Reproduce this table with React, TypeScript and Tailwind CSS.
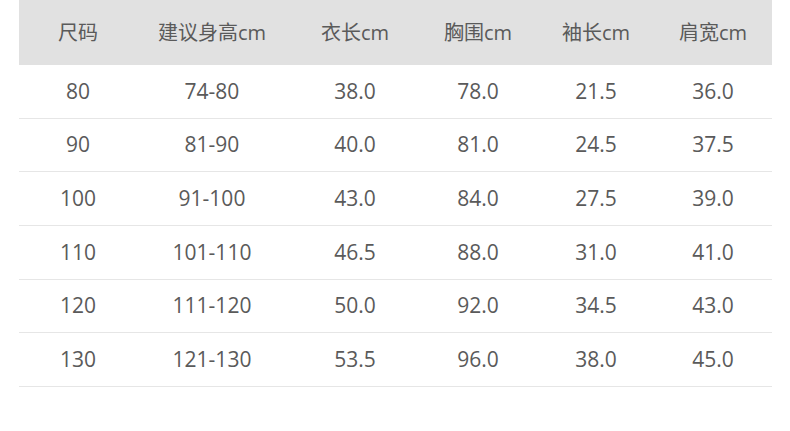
import React from "react";

const headers = ["尺码", "建议身高cm", "衣长cm", "胸围cm", "袖长cm", "肩宽cm"];
const rows = [
  ["80", "74-80", "38.0", "78.0", "21.5", "36.0"],
  ["90", "81-90", "40.0", "81.0", "24.5", "37.5"],
  ["100", "91-100", "43.0", "84.0", "27.5", "39.0"],
  ["110", "101-110", "46.5", "88.0", "31.0", "41.0"],
  ["120", "111-120", "50.0", "92.0", "34.5", "43.0"],
  ["130", "121-130", "53.5", "96.0", "38.0", "45.0"],
];

const grid = "grid grid-cols-[118px_150px_136px_110px_126px_108px_5px]";

export default function App() {
  return (
    <div
      className="w-[790px] h-[431px] bg-white pl-[19px] text-[#5a5a5a]"
      style={{ fontFamily: '"Open Sans", "Noto Sans CJK SC", sans-serif' }}
    >
      <div className="w-[753px]">
        <div className={`${grid} h-[65px] bg-[#e1e1e1] items-center text-[20px]`}>
          {headers.map((h) => (
            <div key={h} className="text-center">{h}</div>
          ))}
          <div />
        </div>
        {rows.map((r, i) => (
          <div
            key={i}
            className={`${grid} h-[53.7px] items-center border-b border-[#e6e6e6] text-[21px]`}
          >
            {r.map((c, j) => (
              <div key={j} className="text-center">{c}</div>
            ))}
            <div />
          </div>
        ))}
      </div>
    </div>
  );
}
